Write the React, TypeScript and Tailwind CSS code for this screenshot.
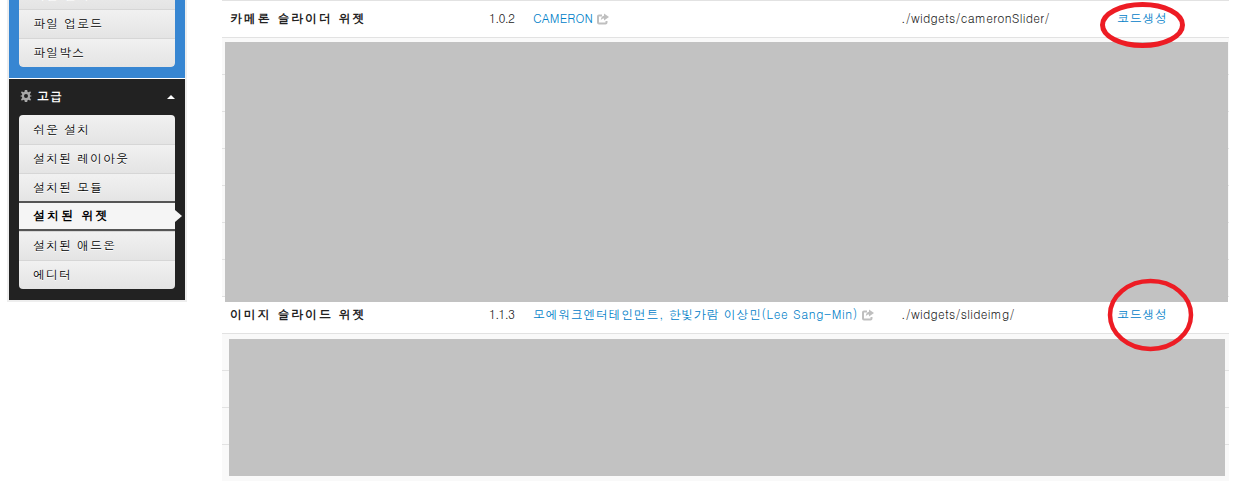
import type { ReactNode } from "react";

const ff = "font-['Dotum','Noto_Sans_CJK_KR','Liberation_Sans',sans-serif]";

function ShareIcon() {
  return (
    <svg viewBox="0 0 12 12" width="12" height="12" aria-hidden="true">
      <path d="M9.500 8v1.500a1 1 0 0 1-1 1H2a1 1 0 0 1-1-1V3.500a1 1 0 0 1 1-1h3" fill="none" stroke="#bfbfbf" strokeWidth="2" />
      <path d="M7 0.500l5 3.500-5 3.500V5.500C5.500 5.500 4.500 6 3.800 7.500 3.800 4.800 5 3 7 2.700z" fill="#bfbfbf" />
    </svg>
  );
}

function Gear() {
  return (
    <svg viewBox="0 0 12 12" width="12" height="12" aria-hidden="true">
      <path fillRule="evenodd" fill="#a8a8a8" d="M4.800 0h2.400l.3 1.700 1.200.5L10.200 1.200 11 2.800 9.800 4l.3 1.200L12 6l-1.900.8-.3 1.200L11 9.200l-.8 1.600-1.500-1-1.200.5L7.200 12H4.800l-.3-1.700-1.200-.5-1.500 1L1 9.200 2.200 8l-.3-1.200L0 6l1.900-.8.300-1.200L1 2.800l.8-1.600 1.500 1 1.200-.5zM6 4a2 2 0 1 0 0 4 2 2 0 0 0 0-4z" />
    </svg>
  );
}

function MenuItem({ label, active, first, last }: { label: string; active?: boolean; first?: boolean; last?: boolean }) {
  if (active) {
    return (
      <div className="relative h-[30px] -mt-px z-10 border-y-2 border-[#555] bg-[#f5f5f5] pl-[14px] pb-[2px] flex items-center font-bold text-[12px] tracking-[2.100px] text-black">
        {label}
        <span className="absolute right-[-7px] top-[7px] w-0 h-0 border-y-[6px] border-y-transparent border-l-[7px] border-l-[#f5f5f5]" />
      </div>
    );
  }
  return (
    <div
      className={`h-[29px] pl-[14px] pb-[2px] flex items-center text-[12px] tracking-[1px] text-black [text-shadow:0_1px_0_#fff] bg-gradient-to-b from-[#f1f1f1] to-[#e4e4e4] ${first ? "rounded-t-[4px]" : "border-t border-[#d6d6d6]"} ${last ? "rounded-b-[4px]" : ""}`}
    >
      {label}
    </div>
  );
}

function Row({ name, version, author, authorTrack, path }: { name: string; version: string; author: string; authorTrack: string; path: string }) {
  return (
    <div className="h-[37px] pb-[2px] flex items-center bg-white border-b border-[#e2e2e2] text-[12px] text-[#222]">
      <div className="w-[267px] pl-[8px] font-bold tracking-[1.850px] text-[#222]">{name}</div>
      <div className="w-[44px] tracking-[-1px]">{version}</div>
      <div className={`w-[368px] flex items-center gap-[4px] text-[#0080c8] ${authorTrack}`}>
        {author}
        <span className="mt-[2px]">
          <ShareIcon />
        </span>
      </div>
      <div className="w-[216px] tracking-[0.270px]">{path}</div>
      <div className="text-[#0080c8] tracking-[0.650px]">코드생성</div>
    </div>
  );
}

function Lines({ count, children }: { count: number; children: ReactNode }) {
  return (
    <div className="relative bg-[#f9f9f9]">
      {Array.from({ length: count }).map((_, i) => (
        <div key={i} className="h-[37px] border-b border-[#e2e2e2]" />
      ))}
      {children}
    </div>
  );
}

export default function App() {
  return (
    <div className={`relative w-[1235px] h-[481px] overflow-hidden bg-white flex ${ff}`}>
      <aside className="ml-[7px] w-[180px] self-start -mt-[20px] border-2 border-t-0 border-[#eeeeee] shrink-0">
        <div className="bg-[#3786d2] px-[10px] pb-[11px]">
          <div className="rounded-b-[4px] overflow-hidden">
            <MenuItem label="파일 관리" first />
            <MenuItem label="파일 업로드" />
            <MenuItem label="파일박스" last />
          </div>
        </div>
        <div className="h-px bg-white" />
        <div className="bg-[#222222] px-[10px] pb-[11px]">
          <div className="h-[36px] pb-[2px] flex items-center pl-[1px] text-white">
            <Gear />
            <span className="ml-[5px] font-bold text-[12px] tracking-[1px]">고급</span>
            <span className="ml-auto mt-[1px] w-0 h-0 border-x-[4px] border-x-transparent border-b-[4px] border-b-white" />
          </div>
          <div>
            <MenuItem label="쉬운 설치" first />
            <MenuItem label="설치된 레이아웃" />
            <MenuItem label="설치된 모듈" />
            <MenuItem label="설치된 위젯" active />
            <MenuItem label="설치된 애드온" />
            <MenuItem label="에디터" last />
          </div>
        </div>
      </aside>

      <main className="ml-[35px] w-[1007px] shrink-0 self-start border-t border-[#e2e2e2]">
        <Row name="카메론 슬라이더 위젯" version="1.0.2" author="CAMERON" authorTrack="tracking-[0.100px]" path="./widgets/cameronSlider/" />
        <Lines count={7}>
          <div className="absolute left-[3px] right-px top-[4px] h-[260px] z-10 bg-[#c2c2c2]" />
        </Lines>
        <Row name="이미지 슬라이드 위젯" version="1.1.3" author="모에워크엔터테인먼트, 한빛가람 이상민(Lee Sang-Min)" authorTrack="tracking-[0.600px]" path="./widgets/slideimg/" />
        <Lines count={4}>
          <div className="absolute left-[7px] right-[4px] top-[5px] h-[137px] bg-[#c2c2c2]" />
        </Lines>
      </main>

      <svg className="absolute inset-0 z-20 pointer-events-none" width="1235" height="481" aria-hidden="true">
        <ellipse cx="1142.500" cy="25" rx="40" ry="20.500" fill="none" stroke="#ed1c24" strokeWidth="5" />
        <ellipse cx="1150.500" cy="315" rx="40.500" ry="34" fill="none" stroke="#ed1c24" strokeWidth="4.500" />
      </svg>
    </div>
  );
}
